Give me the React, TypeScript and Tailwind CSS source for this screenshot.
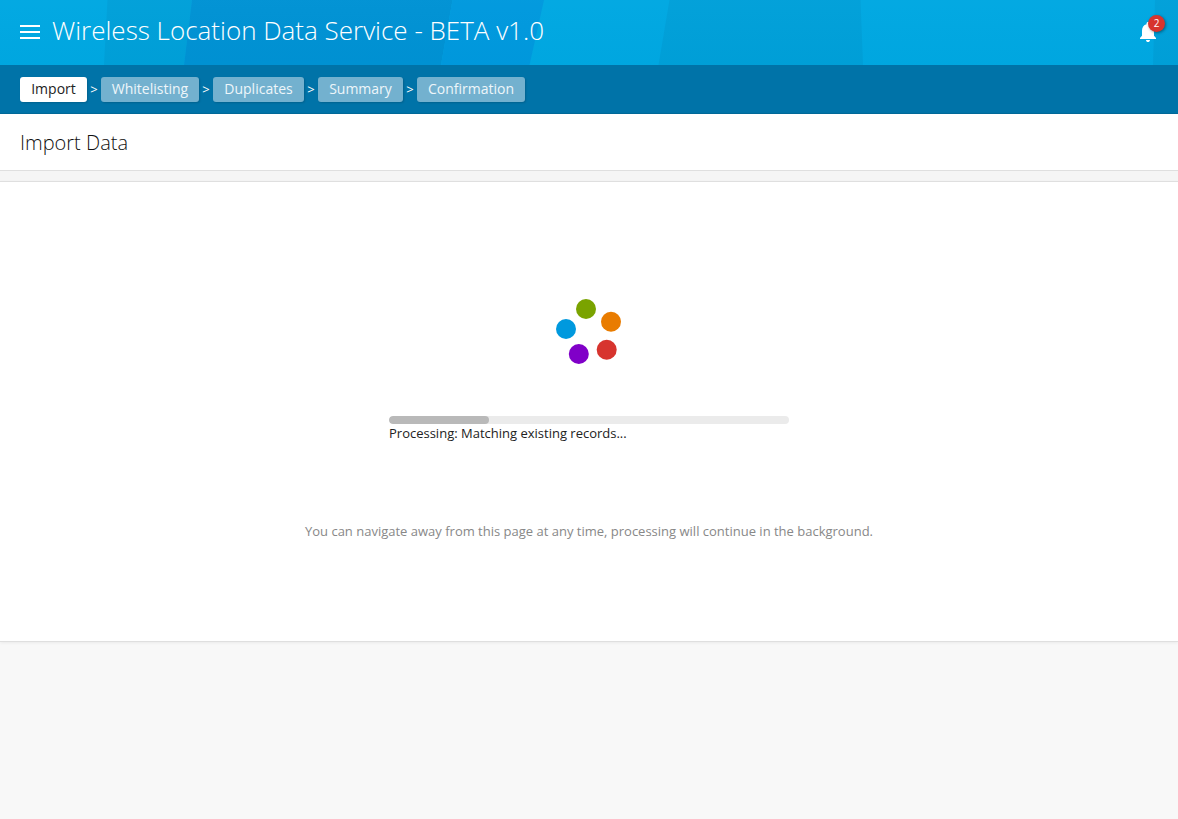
import { Fragment } from "react";

const steps = [
  { label: "Import", width: "w-[67px]", active: true },
  { label: "Whitelisting", width: "w-[98px]", active: false },
  { label: "Duplicates", width: "w-[91px]", active: false },
  { label: "Summary", width: "w-[85px]", active: false },
  { label: "Confirmation", width: "w-[108px]", active: false },
];

function HeaderBackdrop() {
  return (
    <svg className="absolute inset-0 h-full w-full" viewBox="0 0 1178 65" preserveAspectRatio="none" aria-hidden="true">
      <defs>
        <linearGradient id="shade" x1="0" y1="0" x2="0" y2="1">
          <stop offset="0" stopColor="#fff" stopOpacity="0.015" />
          <stop offset="1" stopColor="#000" stopOpacity="0.01" />
        </linearGradient>
      </defs>
      <rect width="1178" height="65" fill="#00a8e2" />
      <path d="M107.5 0H192L184 65H104Z" fill="#00a0d9" />
      <path d="M192 0H452.5L441 65H184Z" fill="#0092d4" />
      <path d="M452.5 0H544L529.5 65H441Z" fill="#0099de" />
      <path d="M669.5 0H860.5L863 65H658.5Z" fill="#00a0d9" />
      <path d="M1155 0H1178V65H1153Z" fill="#00a0d9" />
      <rect width="1178" height="65" fill="url(#shade)" />
    </svg>
  );
}

function Header() {
  return (
    <header className="relative h-[65px]">
      <HeaderBackdrop />
      <div className="relative flex h-full items-center justify-between pb-0.5 pl-5 pr-[22px]">
        <div className="flex items-center">
          <button aria-label="Menu" className="mt-px flex w-5 flex-col gap-1">
            <span className="h-0.5 bg-white" />
            <span className="h-0.5 bg-white" />
            <span className="h-0.5 bg-white" />
          </button>
          <h1 className="-mt-1 ml-3 whitespace-nowrap text-[26px] font-light leading-9 text-white">
            Wireless Location Data Service - BETA v1.0
          </h1>
        </div>
        <button aria-label="Notifications" className="relative h-5 w-4">
          <svg className="h-5 w-4" viewBox="4 2.5 16 19.5" preserveAspectRatio="none" fill="#fff">
            <path d="M12 22c1.1 0 2-.9 2-2h-4c0 1.1.9 2 2 2zm6-6v-5c0-3.07-1.63-5.64-4.5-6.32V4c0-.83-.67-1.5-1.5-1.5s-1.5.67-1.5 1.5v.68C7.64 5.36 6 7.92 6 11v5l-2 2v1h16v-1l-2-2z" />
          </svg>
          <span className="absolute left-[8px] -top-[7px] flex h-[17px] w-[17px] items-center justify-center rounded-full bg-[#d7342e] text-[10px] leading-none text-white shadow-[1px_1px_3px_rgba(0,0,0,0.4)]">
            2
          </span>
        </button>
      </div>
    </header>
  );
}

function Steps() {
  return (
    <nav className="flex h-[49px] items-center bg-[#0073a8] px-5 shadow-[inset_0_-2px_1px_-1px_rgba(0,0,0,0.1)]">
      {steps.map((step, i) => (
        <Fragment key={step.label}>
          {i > 0 && <span className="w-3.5 pb-0.5 text-center text-[13px] leading-4 text-white">&gt;</span>}
          <span
            className={`flex h-[25px] items-center justify-center rounded-[3px] pb-px text-sm leading-none shadow-[1px_1px_2px_rgba(0,0,0,0.15)] ${step.width} ${
              step.active ? "bg-white text-[#222]" : "bg-[#73b1cf] text-[#eef6fa]"
            }`}
          >
            {step.label}
          </span>
        </Fragment>
      ))}
    </nav>
  );
}

function Spinner() {
  return (
    <svg className="h-[70px] w-[70px]" viewBox="554 297 70 70" role="img" aria-label="Loading">
      <circle cx="586" cy="309" r="10" fill="#7aa300" />
      <circle cx="611" cy="321.8" r="10" fill="#e97c00" />
      <circle cx="606.7" cy="349.7" r="10" fill="#d7342e" />
      <circle cx="578.8" cy="354" r="10" fill="#8000c8" />
      <circle cx="566" cy="329" r="10" fill="#0099de" />
    </svg>
  );
}

export default function App() {
  return (
    <div className="min-h-screen bg-[#f8f8f8] font-['Open_Sans',sans-serif] text-[#222]">
      <Header />
      <Steps />
      <div className="flex h-[57px] items-center border-b border-[#dfdfdf] bg-white px-5 pt-0.5">
        <h2 className="text-xl font-light leading-7 text-[#111]">Import Data</h2>
      </div>
      <div className="h-2.5 bg-[#f5f5f5]" />
      <main className="flex h-[461px] flex-col items-center border-y border-[#dfdfdf] bg-white pt-[115px] shadow-[0_1px_3px_rgba(0,0,0,0.06)]">
        <Spinner />
        <div className="mt-[49px] w-[400px]">
          <div className="h-2 overflow-hidden rounded-full bg-[#ebebeb]">
            <div className="h-full w-1/4 rounded-full bg-[#b9b9b9]" />
          </div>
          <p className="text-[13px] leading-[18px]">Processing: Matching existing records...</p>
        </div>
        <p className="mt-20 text-[13px] leading-[18px] text-[#888]">
          You can navigate away from this page at any time, processing will continue in the background.
        </p>
      </main>
    </div>
  );
}
